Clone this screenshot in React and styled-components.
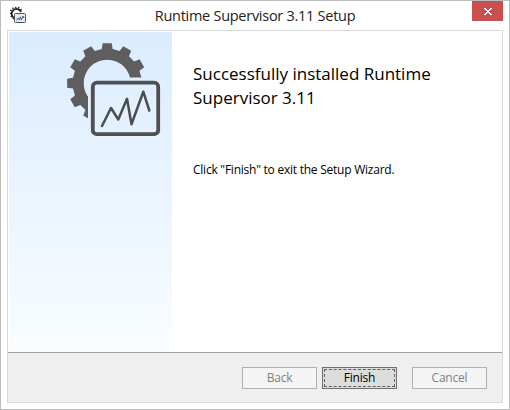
import React from 'react';
import styled, { createGlobalStyle } from 'styled-components';

const GlobalStyle = createGlobalStyle`
  * { box-sizing: border-box; }
  body { margin: 0; background: #fff; }
`;

const Window = styled.div`
  width: 510px;
  height: 410px;
  display: flex;
  flex-direction: column;
  padding: 0 6px 6px 6px;
  background: #fff;
  border: 1px solid #bdbdbd;
  font-family: 'Open Sans', 'Noto Sans', sans-serif;
  color: #000;
`;

const TitleBar = styled.header`
  height: 29px;
  flex: none;
  display: grid;
  grid-template-columns: 31px 1fr 31px;
  align-items: start;
  svg { display: block; }
`;

const AppIcon = styled.div`
  padding: 6px 0 0 3px;
`;

const Title = styled.h1`
  margin: 0;
  text-align: center;
  font-size: 14.5px;
  font-weight: 400;
  line-height: 29px;
  letter-spacing: -0.27px;
  white-space: nowrap;
  color: #222;
`;

const CloseButton = styled.button`
  width: 31px;
  height: 20px;
  padding: 0 0 0 12px;
  border: 0;
  background: #c75050;
`;

const Frame = styled.main`
  flex: 1;
  display: flex;
  flex-direction: column;
  border: 1px solid #d9d9d9;
  width: 496px;
`;

const Content = styled.section`
  height: 321px;
  flex: none;
  display: flex;
  padding: 1px 0 1px 1px;
`;

const Banner = styled.aside`
  width: 163px;
  flex: none;
  padding: 10px 0 0 57px;
  background: linear-gradient(#dbecff, #f9fdff);
  svg { display: block; }
`;

const Message = styled.div`
  padding: 30px 0 0 21px;
`;

const Heading = styled.h2`
  margin: 0;
  font-size: 17px;
  font-weight: 400;
  line-height: 24px;
  letter-spacing: 0;
  white-space: nowrap;
`;

const Body = styled.p`
  margin: 52px 0 0;
  font-size: 12px;
  line-height: 16px;
  letter-spacing: -0.24px;
  white-space: nowrap;
`;

const Footer = styled.footer`
  flex: 1;
  display: flex;
  align-items: flex-start;
  justify-content: flex-end;
  padding: 14px 15px 0 0;
  border-top: 1px solid #a0a0a0;
  background: #efefef;
`;

const Button = styled.button`
  width: 75px;
  height: 22px;
  padding: 1px;
  margin-left: ${(p) => p.$gap || 0}px;
  border: 1px solid ${(p) => (p.$focused ? '#707070' : '#adb2b5')};
  background: ${(p) => (p.$focused ? '#dddddd' : '#f4f4f4')};
  color: ${(p) => (p.$focused ? '#000' : '#838383')};
  font: 12px/16px 'Open Sans', 'Noto Sans', sans-serif;
  letter-spacing: -0.2px;
`;

const FocusRing = styled.span`
  display: block;
  height: 18px;
  border: 1px dashed ${(p) => (p.$visible ? '#606060' : 'transparent')};
`;

const polar = (cx, cy, r, deg) => {
  const a = (deg * Math.PI) / 180;
  return `${(cx + r * Math.sin(a)).toFixed(2)} ${(cy - r * Math.cos(a)).toFixed(2)}`;
};

const gearPath = (cx, cy, outer, root, hole) => {
  const points = [];
  for (let i = 0; i < 12; i += 1) {
    const a = i * 30;
    points.push(
      polar(cx, cy, root, a - 9),
      polar(cx, cy, outer, a - 6.5),
      polar(cx, cy, outer, a + 6.5),
      polar(cx, cy, root, a + 9),
    );
  }
  return `M${points.join('L')}Z M${cx - hole} ${cy}a${hole} ${hole} 0 1 0 ${hole * 2} 0a${hole} ${hole} 0 1 0 ${-hole * 2} 0Z`;
};

const LargeLogo = () => (
  <svg width="96" height="96" viewBox="66 42 96 96" fill="none">
    <clipPath id="gear-visible">
      <path d="M66 42H162V77.5H92Q88 77.5 88 81.5V138H66Z" />
    </clipPath>
    <path
      d={gearPath(107.2, 83.2, 40.3, 34.6, 23.5)}
      fill="#5e5e5e"
      fillRule="evenodd"
      clipPath="url(#gear-visible)"
    />
    <rect x="92.8" y="82.6" width="65.4" height="51.6" rx="4" stroke="#505050" strokeWidth="3.8" />
    <path
      d="M102 126L111 108L118.3 119.5L127 98.8L131.5 124.3L143.3 91.7L149.3 110.5"
      stroke="#4d4d4d"
      strokeWidth="2.5"
      strokeLinecap="round"
      strokeLinejoin="round"
    />
  </svg>
);

const SmallLogo = () => (
  <svg width="16" height="16" viewBox="0 0 16 16" fill="none">
    <path d="M4.5 11.3A4.9 4.9 0 1 1 11 4.8" stroke="#222" strokeWidth="1.8" />
    <path
      d="M4.2 11.7A5.9 5.9 0 1 1 12 4.8"
      stroke="#222"
      strokeWidth="1.5"
      strokeDasharray="1.5 1.5"
    />
    <rect x="4.5" y="6.5" width="11" height="9" rx="1" fill="#dfeaf5" stroke="#4a5560" />
    <path d="M6.5 13.5L8 11L9.2 12.7L10.5 9.8L11.3 13L13.3 9L13.8 11" stroke="#384048" strokeWidth=".8" />
  </svg>
);

const CloseGlyph = () => (
  <svg width="8" height="7" viewBox="0 0 8 7" shapeRendering="crispEdges" fill="#fff">
    <path d="M0 0h2v1h1v1h2v-1h1v-1h2v1h-1v1h-1v1h-1v1h1v1h1v1h1v1h-2v-1h-1v-1h-2v1h-1v1h-2v-1h1v-1h1v-1h1v-1h-1v-1h-1v-1h-1z" />
  </svg>
);

export default function App() {
  return (
    <>
      <GlobalStyle />
      <Window>
        <TitleBar>
          <AppIcon><SmallLogo /></AppIcon>
          <Title>Runtime Supervisor 3.11 Setup</Title>
          <CloseButton aria-label="Close"><CloseGlyph /></CloseButton>
        </TitleBar>
        <Frame>
          <Content>
            <Banner><LargeLogo /></Banner>
            <Message>
              <Heading>Successfully installed Runtime<br />Supervisor 3.11</Heading>
              <Body>Click "Finish" to exit the Setup Wizard.</Body>
            </Message>
          </Content>
          <Footer>
            <Button disabled><FocusRing>Back</FocusRing></Button>
            <Button $focused $gap={5}><FocusRing $visible>Finish</FocusRing></Button>
            <Button disabled $gap={15}><FocusRing>Cancel</FocusRing></Button>
          </Footer>
        </Frame>
      </Window>
    </>
  );
}
